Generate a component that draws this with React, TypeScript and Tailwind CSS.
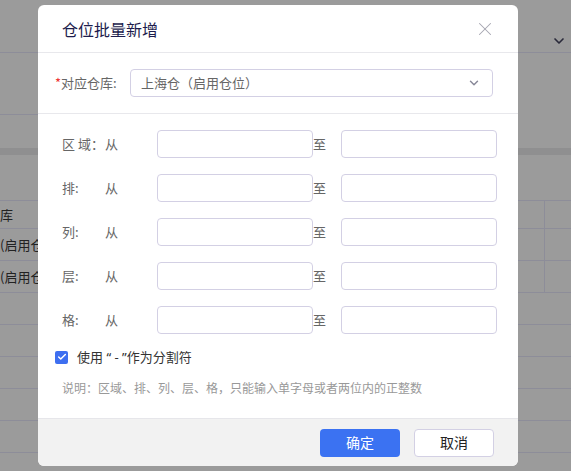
import { X, ChevronDown, Check } from 'lucide-react';

const font = { fontFamily: '"Noto Sans CJK SC", "Noto Sans", sans-serif' };

const ranges = [
  { label: '区 域：' },
  { label: '排:' },
  { label: '列:' },
  { label: '层:' },
  { label: '格:' },
];

function Background() {
  return (
    <div className="absolute inset-0 bg-[#9b9b9b]">
      <div className="h-[53px] border-b border-[#8d8d99] flex justify-end items-start pt-[33px] pr-1">
        <ChevronDown className="w-4 h-4 text-[#2a2a3a]" strokeWidth={2.5} />
      </div>
      <div className="h-[62px] border-b border-[#8d8d99] w-[40px]"></div>
      <div className="h-[33px]"></div>
      <div className="h-[7px] bg-[#8f8f90]"></div>
      <div className="h-[45px]"></div>
      <div className="border-t border-[#8d8d99]">
        <div className="h-[28px] border-b border-[#8d8d99] flex">
          <div className="flex-1 text-[13px] text-[#222] flex items-center">库</div>
          <div className="w-[27px] border-l border-[#8d8d99]"></div>
        </div>
        {[0, 1].map((i) => (
          <div key={i} className="h-[32px] border-b border-[#8d8d99] flex">
            <div className="flex-1 text-[13px] text-[#222] flex items-center">(启用仓位)</div>
            <div className="w-[27px] border-l border-[#8d8d99]"></div>
          </div>
        ))}
        {[0, 1, 2, 3, 4].map((i) => (
          <div key={i} className="h-[32px] border-b border-[#8d8d99]"></div>
        ))}
      </div>
    </div>
  );
}

export default function App() {
  return (
    <div className="relative w-[571px] h-[471px] overflow-hidden" style={font}>
      <Background />

      <div className="absolute left-[38px] top-[5px] w-[480px] h-[461px] bg-white rounded-[6px] overflow-hidden flex flex-col">
        <div className="h-[48px] shrink-0 border-b border-[#e8e8ec] flex items-center justify-between pl-[24px] pr-[22px]">
          <span className="text-[16px] text-[#1d1d4d] leading-none">仓位批量新增</span>
          <X className="w-[22px] h-[22px] text-[#a4a4b0]" strokeWidth={1.1} />
        </div>

        <div className="h-[61px] shrink-0 border-b border-[#e8e8ec] flex items-center pl-[17px]">
          <span className="w-[75px] text-[13px] text-[#666]">
            <span className="text-[#e33]">*</span>对应仓库:
          </span>
          <div className="w-[363px] h-[28px] border border-[#d3d0e4] rounded-[4px] flex items-center justify-between pl-[10px] pr-[11px]">
            <span className="text-[13px] text-[#666]">上海仓（启用仓位）</span>
            <ChevronDown className="w-[14px] h-[14px] text-[#8a8a9a]" strokeWidth={2.5} />
          </div>
        </div>

        <div className="flex-1 flex flex-col pt-[16px]">
          <div className="flex flex-col gap-[16px] pl-[24px]">
            {ranges.map((r) => (
              <div key={r.label} className="flex items-center h-[28px]">
                <span className="w-[43px] text-[13px] text-[#666] whitespace-nowrap">{r.label}</span>
                <span className="w-[52px] text-[13px] text-[#666]">从</span>
                <div className="w-[156px] h-[28px] border border-[#d3d0e4] rounded-[4px]"></div>
                <span className="w-[28px] text-[13px] text-[#666]">至</span>
                <div className="w-[156px] h-[28px] border border-[#d3d0e4] rounded-[4px]"></div>
              </div>
            ))}
          </div>

          <div className="flex items-center gap-[9px] pl-[17px] mt-[13px]">
            <div className="w-[13px] h-[13px] rounded-[2px] bg-[#3e6ff0] flex items-center justify-center">
              <Check className="w-[10px] h-[10px] text-white" strokeWidth={3.5} />
            </div>
            <span className="text-[13px] text-[#333]">
              使用<span style={{ fontFamily: '"Noto Sans", sans-serif' }}> “ - ”</span>作为分割符
            </span>
          </div>

          <div className="pl-[24px] mt-[11px] text-[12px] text-[#999]">
            说明：区域、排、列、层、格，只能输入单字母或者两位内的正整数
          </div>
        </div>

        <div className="h-[48px] shrink-0 bg-[#f2f2f2] border-t border-[#e6e6ea] flex items-center justify-end gap-[14px] pr-[24px]">
          <button className="w-[80px] h-[28px] rounded-[4px] bg-[#3b72f2] text-white text-[14px]">确定</button>
          <button className="w-[80px] h-[28px] rounded-[4px] bg-white border border-[#d3d0e4] text-[#222] text-[14px]">取消</button>
        </div>
      </div>
    </div>
  );
}
